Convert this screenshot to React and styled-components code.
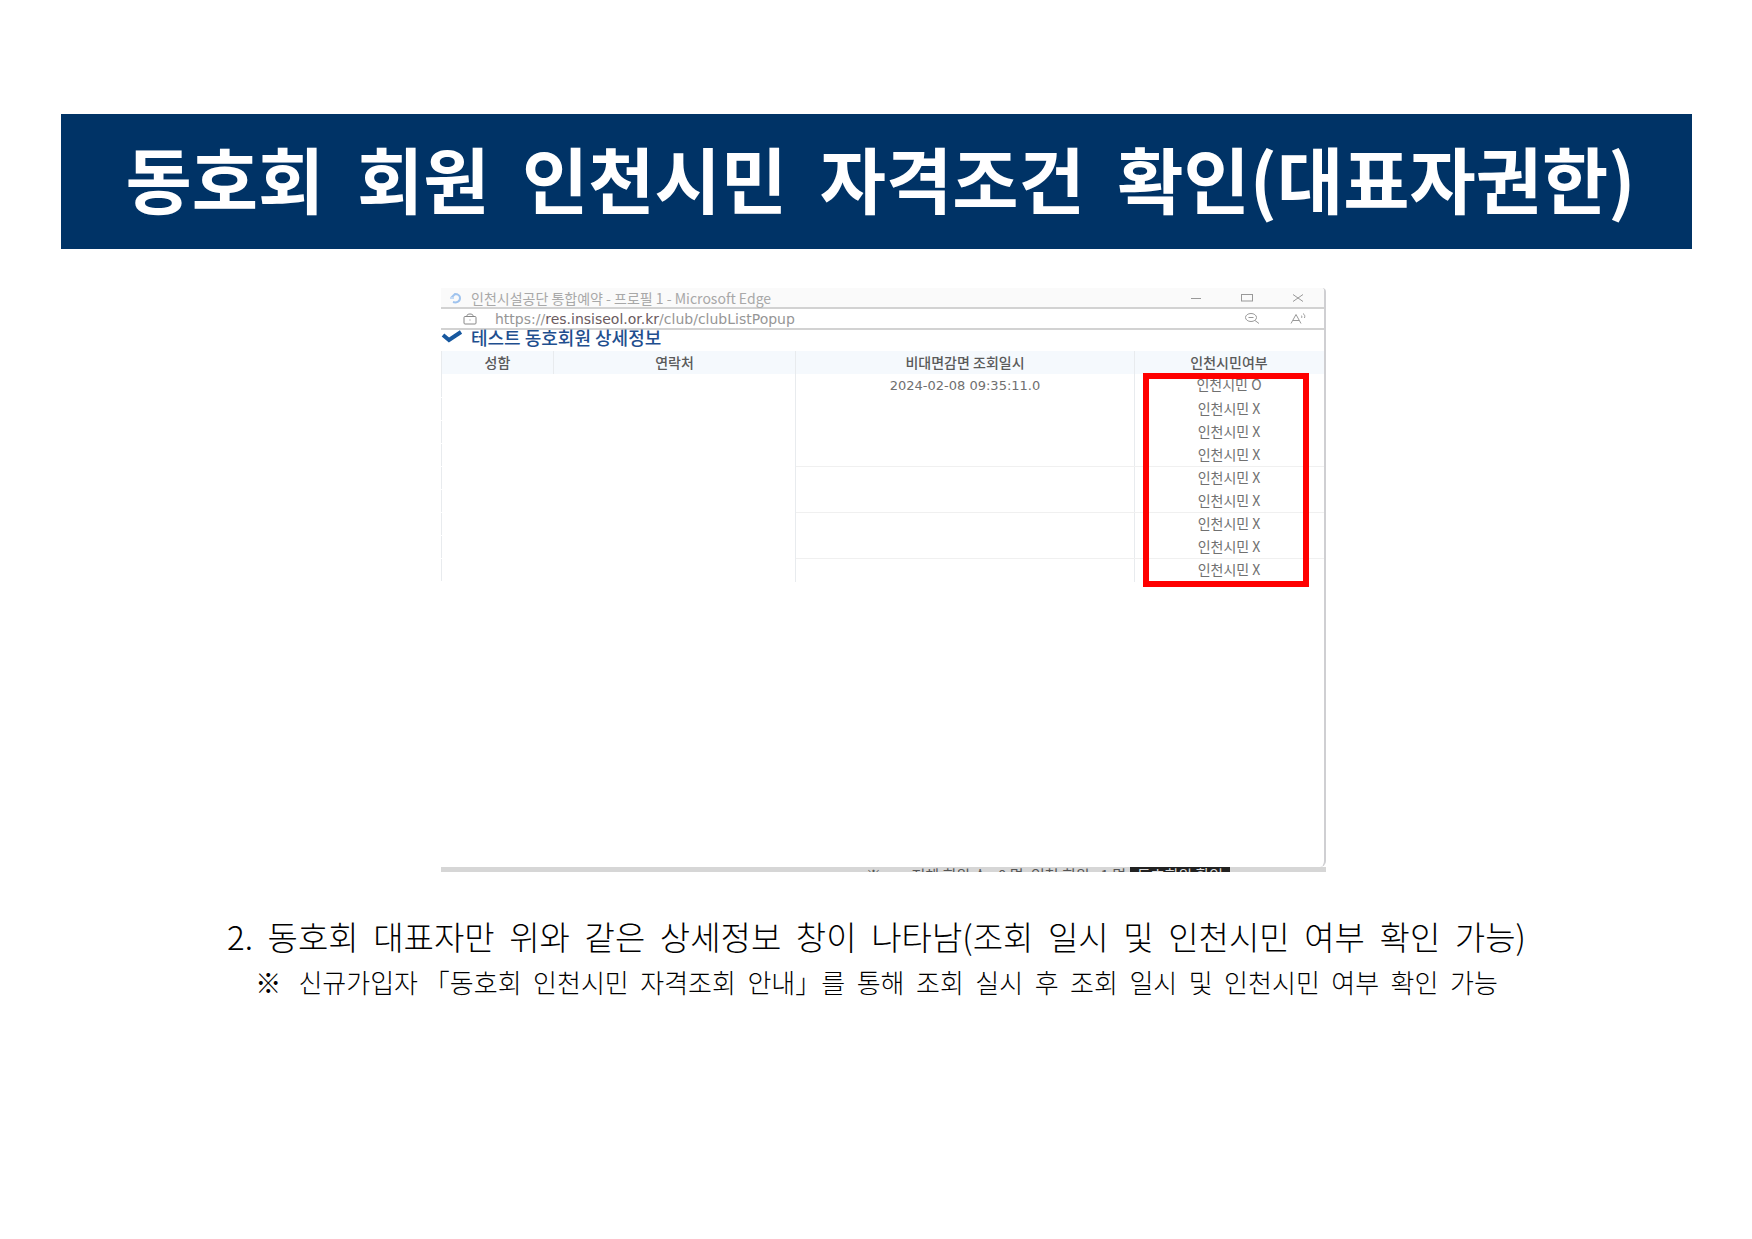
import React from 'react';
import styled, { createGlobalStyle } from 'styled-components';

const colors = {
  navy: '#003366',
  heading: '#1f4f8f',
  alert: '#ff0000',
  line: '#d2d2d2',
  tableLine: '#e8ebee',
  tableHead: '#f5f9fd',
  muted: '#a8a8a8',
};

const GlobalStyle = createGlobalStyle`
  *, *::before, *::after {
    box-sizing: border-box;
  }

  body {
    margin: 0;
    background: #ffffff;
    font-family: 'Noto Sans CJK KR', 'Noto Sans', sans-serif;
  }
`;

const Page = styled.main`
  min-height: 100vh;
  padding: 114px 60px 60px 61px;
  background: #ffffff;
`;

const Banner = styled.h1`
  margin: 0;
  padding: 10px 20px 20px 28px;
  background: ${colors.navy};
  color: #ffffff;
  font-size: 72px;
  font-weight: 700;
  line-height: 105px;
  text-align: center;
  white-space: pre-wrap;
`;

const Figure = styled.section`
  display: flex;
  justify-content: center;
  padding: 39px 0 0 14px;
`;

const Popup = styled.div`
  display: flex;
  flex-direction: column;
  width: 100%;
  max-width: 885px;
`;

const PopupFrame = styled.div`
  min-height: 579px;
  border-right: 2px solid #cfcfd2;
  border-radius: 0 4px 6px 0;
  overflow: hidden;
`;

const TitleBar = styled.header`
  display: flex;
  align-items: center;
  height: 21px;
  padding: 0 18px 0 8px;
  border-bottom: 2px solid ${colors.line};
  background: #fafafa;
  color: ${colors.muted};
  font-size: 14px;
  line-height: 18px;
`;

const AddressBar = styled(TitleBar)`
  padding-left: 22px;
  background: #ffffff;
`;

const TitleText = styled.span`
  margin-left: 8px;
`;

const Address = styled.a`
  margin-left: 18px;
  color: #969696;
  font-family: 'DejaVu Sans', sans-serif;
  font-size: 14px;
  text-decoration: none;

  strong {
    color: #6a5a60;
    font-weight: 400;
  }
`;

const Controls = styled.div`
  display: flex;
  gap: ${props => (props.tight ? '30px' : '35px')};
  margin-left: auto;
`;

const IconButton = styled.button`
  display: flex;
  align-items: center;
  justify-content: center;
  width: 16px;
  height: 16px;
  padding: 0;
  border: 0;
  background: transparent;
  color: #999999;
`;

const Heading = styled.h2`
  display: flex;
  align-items: center;
  gap: 8px;
  height: 21px;
  margin: 0;
  padding-bottom: 8px;
  color: ${colors.heading};
  font-size: 18px;
  font-weight: 500;
  line-height: 18px;
`;

const TableWrapper = styled.div`
  position: relative;
`;

const Table = styled.table`
  width: 100%;
  border-collapse: collapse;
  table-layout: fixed;
  border-left: 1px solid ${colors.tableLine};
`;

const Col = styled.col`
  width: ${props => props.width};
`;

const HeadCell = styled.th`
  height: 23px;
  padding: 0 0 2px;
  border-right: 1px solid ${props => (props.last ? 'transparent' : colors.tableLine)};
  background: ${colors.tableHead};
  color: #5a5a5a;
  font-size: 14px;
  font-weight: 500;
  line-height: 20px;
`;

const Cell = styled.td`
  height: 23px;
  padding: ${props => (props.date ? '2px 0 0' : '0 0 2px')};
  border-right: 1px solid ${props => (props.ruled ? colors.tableLine : 'transparent')};
  border-bottom: 1px solid ${props => (props.underlined ? '#f0f0f0' : 'transparent')};
  color: #707070;
  font-size: ${props => (props.date ? '13px' : '14px')};
  font-family: ${props => (props.date ? "'DejaVu Sans', sans-serif" : 'inherit')};
  line-height: 20px;
  text-align: center;
`;

const Highlight = styled.div`
  position: absolute;
  top: 22px;
  right: 15px;
  width: 166px;
  height: 214px;
  border: 6px solid ${colors.alert};
  pointer-events: none;
`;

const CutOffStrip = styled.div`
  display: flex;
  align-items: flex-start;
  height: 5px;
  padding: 0 96px 0 425px;
  background: #d6d6d6;
  color: #555555;
  font-size: 15px;
  line-height: 15px;
  white-space: nowrap;
  overflow: hidden;
`;

const CutOffText = styled.span`
  margin-left: auto;
`;

const CutOffButton = styled.button`
  width: 100px;
  margin-left: 4px;
  padding: 0;
  border: 0;
  background: #222222;
  color: #dddddd;
  font-family: inherit;
  font-size: 15px;
  line-height: 15px;
`;

const Notes = styled.section`
  padding-top: 41px;
  color: #000000;
  text-align: center;
`;

const Note = styled.p`
  margin: 0;
  font-size: ${props => (props.small ? '26px' : '33px')};
  font-weight: 300;
  line-height: 46px;
  white-space: pre-wrap;
`;

const SwirlIcon = () => (
  <svg width="14" height="12" viewBox="0 0 14 12" fill="none" aria-hidden="true">
    <path d="M2 6L6 2C9 2 11 4 11 6C11 10 7 11 4 10" stroke="#9fc3ee" strokeWidth="2" />
    <path d="M1 6H5" stroke="#c3daf5" strokeWidth="2" />
  </svg>
);

const LockIcon = () => (
  <svg width="14" height="12" viewBox="0 0 14 12" fill="none" stroke="#888888" aria-hidden="true">
    <rect x="1" y="3.500" width="12" height="7.500" rx="1" />
    <path d="M4 3.500V2.500C4 0.500 10 0.500 10 2.500V3.500" />
    <path d="M6.500 7H7.500" />
  </svg>
);

const CheckIcon = () => (
  <svg width="22" height="13" viewBox="0 0 22 13" fill="none" aria-hidden="true">
    <path d="M2 5L8 10L20 2" stroke="#17589f" strokeWidth="4" />
  </svg>
);

const MinimizeIcon = () => (
  <svg width="12" height="10" viewBox="0 0 12 10" stroke="currentColor" aria-hidden="true">
    <path d="M1 5.500H11" />
  </svg>
);

const MaximizeIcon = () => (
  <svg width="12" height="8" viewBox="0 0 12 8" fill="none" stroke="currentColor" aria-hidden="true">
    <rect x="0.500" y="0.500" width="11" height="6.500" />
  </svg>
);

const CloseIcon = () => (
  <svg width="12" height="8" viewBox="0 0 12 8" stroke="currentColor" aria-hidden="true">
    <path d="M1 0.500L11 7.500M11 0.500L1 7.500" />
  </svg>
);

const ZoomOutIcon = () => (
  <svg width="16" height="11" viewBox="0 0 16 11" fill="none" stroke="currentColor" aria-hidden="true">
    <ellipse cx="7" cy="4.500" rx="5.500" ry="4" />
    <path d="M4.500 4.500H9.500M11 7.500L15 10.500" />
  </svg>
);

const ReadAloudIcon = () => (
  <svg width="16" height="11" viewBox="0 0 16 11" fill="none" stroke="currentColor" aria-hidden="true">
    <path d="M1 10.500L6 1.500L11 10.500M3 7.500H9" />
    <path d="M11 2.500C12 3 12 4 11.500 5M13 0.500C15 2 15 3 14.500 5" />
  </svg>
);

const columns = [
  { label: '성함', width: '112px' },
  { label: '연락처', width: '242px' },
  { label: '비대면감면 조회일시', width: '339px' },
  { label: '인천시민여부', width: 'auto' },
];

const members = [
  { date: '2024-02-08 09:35:11.0', citizen: 'O' },
  { citizen: 'X' },
  { citizen: 'X' },
  { citizen: 'X', underlined: true },
  { citizen: 'X' },
  { citizen: 'X', underlined: true },
  { citizen: 'X' },
  { citizen: 'X', underlined: true },
  { citizen: 'X' },
];

const MemberTable = () => (
  <TableWrapper>
    <Table>
      <colgroup>
        {columns.map(column => <Col key={column.label} width={column.width} />)}
      </colgroup>
      <thead>
        <tr>
          {columns.map((column, i) => (
            <HeadCell key={column.label} scope="col" last={i === columns.length - 1 ? 1 : 0}>
              {column.label}
            </HeadCell>
          ))}
        </tr>
      </thead>
      <tbody>
        {members.map((member, i) => (
          <tr key={i}>
            <Cell />
            <Cell ruled={1} />
            <Cell ruled={1} date={1} underlined={member.underlined ? 1 : 0}>{member.date}</Cell>
            <Cell underlined={member.underlined ? 1 : 0}>인천시민 {member.citizen}</Cell>
          </tr>
        ))}
      </tbody>
    </Table>
    <Highlight />
  </TableWrapper>
);

const App = () => {
  return (
    <Page>
      <GlobalStyle />
      <Banner>동호회  회원  인천시민  자격조건  확인(대표자권한)</Banner>
      <Figure>
        <Popup>
          <PopupFrame>
            <TitleBar>
              <SwirlIcon />
              <TitleText>인천시설공단 통합예약 - 프로필 1 - Microsoft Edge</TitleText>
              <Controls>
                <IconButton aria-label="최소화"><MinimizeIcon /></IconButton>
                <IconButton aria-label="최대화"><MaximizeIcon /></IconButton>
                <IconButton aria-label="닫기"><CloseIcon /></IconButton>
              </Controls>
            </TitleBar>
            <AddressBar as="div">
              <LockIcon />
              <Address href="https://res.insiseol.or.kr/club/clubListPopup">
                https://<strong>res.insiseol.or.kr</strong>/club/clubListPopup
              </Address>
              <Controls tight={1}>
                <IconButton aria-label="축소"><ZoomOutIcon /></IconButton>
                <IconButton aria-label="소리내어 읽기"><ReadAloudIcon /></IconButton>
              </Controls>
            </AddressBar>
            <Heading>
              <CheckIcon />
              테스트 동호회원 상세정보
            </Heading>
            <MemberTable />
          </PopupFrame>
          <CutOffStrip>
            <span>※</span>
            <CutOffText>· 전체 회원 수 : 0 명, 인천 회원 : 1 명</CutOffText>
            <CutOffButton>동호회원 확인</CutOffButton>
          </CutOffStrip>
        </Popup>
      </Figure>
      <Notes>
        <Note>2.  동호회  대표자만  위와  같은  상세정보  창이  나타남(조회  일시  및  인천시민  여부  확인  가능)</Note>
        <Note small={1}>※   신규가입자 「동호회  인천시민  자격조회  안내」를  통해  조회  실시  후  조회  일시  및  인천시민  여부  확인  가능</Note>
      </Notes>
    </Page>
  );
};

export default App;
